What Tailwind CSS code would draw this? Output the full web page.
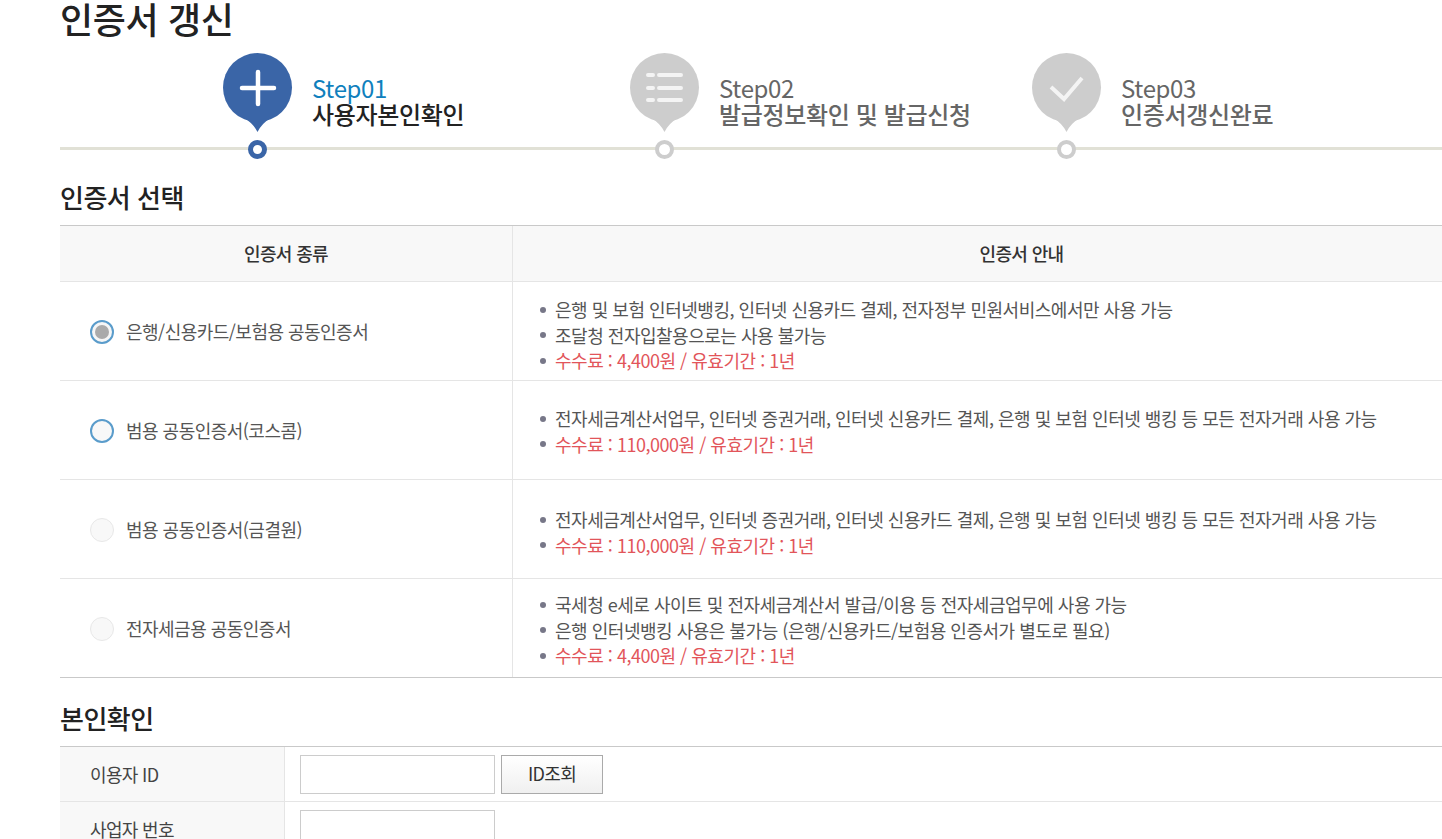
<!doctype html>
<html lang="ko"><head><meta charset="utf-8">
<script src="https://cdn.jsdelivr.net/npm/@tailwindcss/browser@4"></script>
</head>
<body class="bg-white overflow-hidden font-['Noto_Sans_CJK_KR','Noto_Sans',sans-serif] text-[#333]">
<div class="h-[839px] w-[1442px] overflow-hidden pl-[60px]">
  <h1 class="h-[53px] text-[36px] leading-[36px] font-medium text-[#222] tracking-[-0.35px]">인증서 갱신</h1>
  <div class="relative h-[107px] w-[1382px]">
    <div class="absolute left-0 right-0 top-[94px] h-[3px] bg-[#e1e1d6]"></div>
    <div class="flex pl-[163px]">
      <div class="relative flex w-[407px] gap-[19px]">
        <div class="relative h-[107px] w-[70px]">
          <svg width="70" height="80" viewBox="0 0 70 80"><circle cx="34.5" cy="34.5" r="34.5" fill="#3a65a7"/><path d="M21 65Q30 70 34.5 79Q39 70 48 65Z" fill="#3a65a7"/><path d="M35 19V51M19 35H51" stroke="#fff" stroke-width="4.5" stroke-linecap="round"/></svg>
          <div class="absolute left-[25px] top-[87px] size-[19px] rounded-full border-[5px] border-[#3a65a7] bg-white"></div>
        </div>
        <div class="pt-[22px] text-[24px] leading-[26px] tracking-[-0.35px]"><div class="text-[#0f80bd]">Step01</div><div class="font-medium text-[#222]">사용자본인확인</div></div>
      </div>
      <div class="relative flex w-[402px] gap-[19px]">
        <div class="relative h-[107px] w-[70px]">
          <svg width="70" height="80" viewBox="0 0 70 80"><circle cx="34.5" cy="34.5" r="34.5" fill="#cdcdcd"/><path d="M21 65Q30 70 34.5 79Q39 70 48 65Z" fill="#cdcdcd"/><path d="M29 22H51M29 35H51M29 47H51M18 22H23M18 35H23M18 47H23" stroke="#f4f4f4" stroke-width="4" stroke-linecap="round"/></svg>
          <div class="absolute left-[25px] top-[87px] size-[19px] rounded-full border-[4px] border-[#cdcdcd] bg-white"></div>
        </div>
        <div class="pt-[22px] text-[24px] leading-[26px] tracking-[-0.35px] text-[#666]"><div>Step02</div><div class="font-medium">발급정보확인 및 발급신청</div></div>
      </div>
      <div class="relative flex gap-[19px]">
        <div class="relative h-[107px] w-[70px]">
          <svg width="70" height="80" viewBox="0 0 70 80"><circle cx="34.5" cy="34.5" r="34.5" fill="#cdcdcd"/><path d="M21 65Q30 70 34.5 79Q39 70 48 65Z" fill="#cdcdcd"/><path d="M19 34L32 46L50 25" fill="none" stroke="#f4f4f4" stroke-width="4"/></svg>
          <div class="absolute left-[25px] top-[87px] size-[19px] rounded-full border-[4px] border-[#cdcdcd] bg-white"></div>
        </div>
        <div class="pt-[22px] text-[24px] leading-[26px] tracking-[-0.35px] text-[#666]"><div>Step03</div><div class="font-medium">인증서갱신완료</div></div>
      </div>
    </div>
  </div>
  <h2 class="mt-[19px] h-[46px] text-[26px] leading-[36px] font-medium text-[#222] tracking-[-0.5px]">인증서 선택</h2>
  <div class="w-[1470px] border-y border-[#c9c9c9] text-[18px] leading-[25.5px] tracking-[-0.48px]">
    <div class="grid h-[56px] grid-cols-[453px_1fr] border-b border-[#e5e5e5] bg-[#f8f8f8] text-center font-medium tracking-[-0.65px] text-[#333]">
      <div class="flex items-center justify-center border-r border-[#e5e5e5]">인증서 종류</div>
      <div class="flex items-center justify-center">인증서 안내</div>
    </div>
    <div class="grid h-[99px] grid-cols-[453px_1fr] border-b border-[#e5e5e5]">
      <div class="flex items-center gap-[12px] border-r border-[#e5e5e5] pl-[30px] pt-[2px] text-[#555]">
        <span class="flex size-[24px] items-center justify-center rounded-full border-2 border-[#5a9ccb] bg-[#f6f6f6]"><span class="size-[14px] rounded-full bg-[#aaa]"></span></span><span class="tracking-[-0.52px]">은행/신용카드/보험용 공동인증서</span>
      </div>
      <div class="pl-[27px] pt-[15px] text-[#555]">
        <div class="flex items-center gap-[9px]"><span class="size-[6px] rounded-full bg-[#778]"></span>은행 및 보험 인터넷뱅킹, 인터넷 신용카드 결제, 전자정부 민원서비스에서만 사용 가능</div>
        <div class="flex items-center gap-[9px]"><span class="size-[6px] rounded-full bg-[#778]"></span>조달청 전자입찰용으로는 사용 불가능</div>
        <div class="flex items-center gap-[9px] text-[#e2555a]"><span class="size-[6px] rounded-full bg-[#778]"></span>수수료 : 4,400원 / 유효기간 : 1년</div>
      </div>
    </div>
    <div class="grid h-[99px] grid-cols-[453px_1fr] border-b border-[#e5e5e5]">
      <div class="flex items-center gap-[12px] border-r border-[#e5e5e5] pl-[30px] pt-[2px] text-[#555]">
        <span class="size-[24px] rounded-full border-2 border-[#5a9ccb] bg-[#f8f8f8]"></span><span class="tracking-[-0.52px]">범용 공동인증서(코스콤)</span>
      </div>
      <div class="pl-[27px] pt-[25px] text-[#555]">
        <div class="flex items-center gap-[9px]"><span class="size-[6px] rounded-full bg-[#778]"></span>전자세금계산서업무, 인터넷 증권거래, 인터넷 신용카드 결제, 은행 및 보험 인터넷 뱅킹 등 모든 전자거래 사용 가능</div>
        <div class="flex items-center gap-[9px] text-[#e2555a]"><span class="size-[6px] rounded-full bg-[#778]"></span>수수료 : 110,000원 / 유효기간 : 1년</div>
      </div>
    </div>
    <div class="grid h-[99px] grid-cols-[453px_1fr] border-b border-[#e5e5e5]">
      <div class="flex items-center gap-[12px] border-r border-[#e5e5e5] pl-[30px] pt-[2px] text-[#555]">
        <span class="size-[24px] rounded-full border-[1.5px] border-[#e8e8e8] bg-[#f8f8f8]"></span><span class="tracking-[-0.52px]">범용 공동인증서(금결원)</span>
      </div>
      <div class="pl-[27px] pt-[27px] text-[#555]">
        <div class="flex items-center gap-[9px]"><span class="size-[6px] rounded-full bg-[#778]"></span>전자세금계산서업무, 인터넷 증권거래, 인터넷 신용카드 결제, 은행 및 보험 인터넷 뱅킹 등 모든 전자거래 사용 가능</div>
        <div class="flex items-center gap-[9px] text-[#e2555a]"><span class="size-[6px] rounded-full bg-[#778]"></span>수수료 : 110,000원 / 유효기간 : 1년</div>
      </div>
    </div>
    <div class="grid h-[98px] grid-cols-[453px_1fr]">
      <div class="flex items-center gap-[12px] border-r border-[#e5e5e5] pl-[30px] pt-[2px] text-[#555]">
        <span class="size-[24px] rounded-full border-[1.5px] border-[#e8e8e8] bg-[#f8f8f8]"></span><span class="tracking-[-0.52px]">전자세금용 공동인증서</span>
      </div>
      <div class="pl-[27px] pt-[13px] text-[#555]">
        <div class="flex items-center gap-[9px]"><span class="size-[6px] rounded-full bg-[#778]"></span>국세청 e세로 사이트 및 전자세금계산서 발급/이용 등 전자세금업무에 사용 가능</div>
        <div class="flex items-center gap-[9px]"><span class="size-[6px] rounded-full bg-[#778]"></span>은행 인터넷뱅킹 사용은 불가능 (은행/신용카드/보험용 인증서가 별도로 필요)</div>
        <div class="flex items-center gap-[9px] text-[#e2555a]"><span class="size-[6px] rounded-full bg-[#778]"></span>수수료 : 4,400원 / 유효기간 : 1년</div>
      </div>
    </div>
  </div>
  <h2 class="mt-[22px] h-[46px] text-[26px] leading-[36px] font-medium text-[#222] tracking-[-0.5px]">본인확인</h2>
  <div class="w-[1470px] border-t border-[#c9c9c9] text-[18px] leading-[25.5px] tracking-[-0.65px] text-[#444]">
    <div class="grid h-[55px] grid-cols-[225px_1fr] border-b border-[#e5e5e5]">
      <div class="flex items-center border-r border-[#e5e5e5] bg-[#f8f8f8] pl-[30px] pt-[2px]">이용자 ID</div>
      <div class="flex items-center gap-[6px] pl-[15px]">
        <input type="text" class="h-[39px] w-[195px] border border-[#ccc] bg-white">
        <button class="h-[39px] w-[102px] border border-[#aaa] bg-linear-to-b from-white to-[#f0f0f0] text-[#333]">ID조회</button>
      </div>
    </div>
    <div class="grid h-[55px] grid-cols-[225px_1fr]">
      <div class="flex items-center border-r border-[#e5e5e5] bg-[#f8f8f8] pl-[30px]">사업자 번호</div>
      <div class="flex items-center pl-[15px]">
        <input type="text" class="h-[39px] w-[195px] border border-[#ccc] bg-white">
      </div>
    </div>
  </div>
</div>
</body></html>
